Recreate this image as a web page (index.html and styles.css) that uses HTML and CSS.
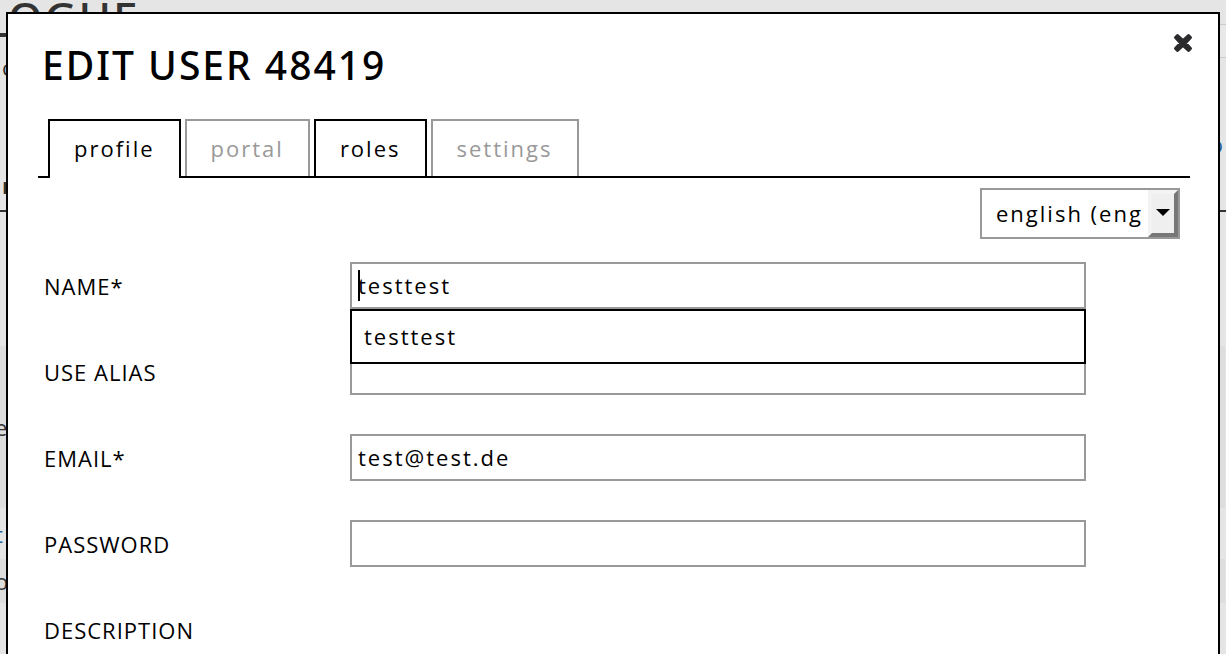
FILE: index.html
```html
<!DOCTYPE html>
<html lang="en">
<head>
<meta charset="utf-8">
<title>Edit user</title>
<link rel="stylesheet" href="styles.css">
</head>
<body>
<div class="page" aria-hidden="true">
  <header class="page-head">
    <div class="brand">
      <div class="brand-title">OGUE</div>
      <div class="crumb">c</div>
      <div class="crumb crumb-strong">r</div>
    </div>
    <div class="tools">
      <div class="tool-box"></div>
      <div class="tool-text">or</div>
    </div>
  </header>
  <div class="rows">
    <div class="row row-tall">e</div>
    <div class="row row-link">t</div>
    <div class="row row-shade">o</div>
  </div>
</div>

<main class="modal" role="dialog" aria-labelledby="modal-title">
  <div class="modal-head">
    <h1 class="modal-title" id="modal-title">EDIT USER 48419</h1>
    <button class="close" type="button" aria-label="Close">
      <svg viewBox="0 0 20 20" width="20" height="20"><path d="M4.500 2.500L10 7.500L15.500 2.500L17.500 4.500L12.500 10L17.500 15.500L15.500 17.500L10 12.500L4.500 17.500L2.500 15.500L7.500 10L2.500 4.500Z" fill="#2b2b2d" stroke="#2b2b2d" stroke-width="3" stroke-linejoin="round"/></svg>
    </button>
  </div>
  <nav class="tabs">
    <button class="tab tab-active" type="button">profile</button>
    <button class="tab tab-disabled" type="button" disabled>portal</button>
    <button class="tab" type="button">roles</button>
    <button class="tab tab-disabled" type="button" disabled>settings</button>
  </nav>
  <div class="language">
    <select class="language-select" aria-label="Language">
      <option>english (english)</option>
    </select>
    <span class="language-arrow"><svg viewBox="0 0 14 8" width="14" height="8"><path d="M0 0H14L7 7Z" fill="#000"/></svg></span>
  </div>
  <form class="form">
    <label class="label" for="name">NAME*</label>
    <div class="field field-focus">
      <input class="input" id="name" type="text" value="testtest" autocomplete="off">
      <ul class="suggest" role="listbox" aria-label="Suggestions">
        <li class="suggest-item" role="option">testtest</li>
      </ul>
    </div>
    <label class="label" for="alias">USE ALIAS</label>
    <div class="field"><input class="input" id="alias" type="text"></div>
    <label class="label" for="email">EMAIL*</label>
    <div class="field"><input class="input" id="email" type="email" value="test@test.de"></div>
    <label class="label" for="password">PASSWORD</label>
    <div class="field"><input class="input" id="password" type="password"></div>
    <label class="label" for="description">DESCRIPTION</label>
    <div class="field"><textarea class="input description" id="description"></textarea></div>
  </form>
</main>
</body>
</html>
```

FILE: styles.css
```css
* {
  box-sizing: border-box;
}

body {
  margin: 0;
  min-height: 100vh;
  overflow: hidden;
  background: #e5e5e5;
  color: #000;
  font: 22px/30px "Open Sans", "Noto Sans", sans-serif;
  letter-spacing: 2px;
}

button,
input,
textarea,
select {
  margin: 0;
  border-radius: 0;
  color: inherit;
  font: inherit;
  letter-spacing: inherit;
}

/* Page behind the dialog */
.page {
  color: #333;
}

.page-head {
  display: flex;
  height: 212px;
  border-bottom: 2px solid #333;
}

.brand {
  flex: 1;
}

.brand-title {
  height: 37px;
  padding-left: 8px;
  border-bottom: 4px solid #333;
  font-family: "Noto Sans", sans-serif;
  font-size: 44px;
  font-weight: 500;
  line-height: 34px;
}

.crumb {
  height: 60px;
  padding-left: 2px;
  line-height: 60px;
}

.crumb-strong {
  height: 112px;
  line-height: 176px;
  font-weight: 700;
}

.tools {
  flex: 1;
  padding-top: 24px;
  text-align: right;
}

.tool-box {
  height: 34px;
  border: solid #ccc;
  border-width: 1px 0;
  background: #e8e8e8;
}

.tool-text {
  padding-top: 71px;
  margin-right: -10px;
  color: #2b6297;
}

.rows {
  padding: 134px 1px 0 0;
}

.row {
  display: flex;
  align-items: center;
  height: 44px;
  margin-left: -5px;
}

.row-tall {
  height: 162px;
  background: #ddd;
}

.row-link {
  height: 51px;
  color: #2b6297;
}

.row-shade {
  background: #ddd;
}

/* Dialog */
.modal {
  position: absolute;
  top: 12px;
  right: 6px;
  left: 6px;
  min-height: 100vh;
  padding: 18px 28px 40px 30px;
  border: 2px solid #000;
  background: #fff;
}

.modal-head {
  display: flex;
  justify-content: space-between;
  align-items: flex-start;
  margin-right: -4px;
}

.modal-title {
  margin: 7px 0 0 4px;
  font-family: "Noto Sans", sans-serif;
  font-size: 39px;
  font-weight: 500;
  line-height: 52px;
}

.close {
  display: flex;
  padding: 1px;
  border: 0;
  background: none;
}

.tabs {
  display: flex;
  gap: 4px;
  margin-top: 28px;
  padding-left: 10px;
  border-bottom: 2px solid #000;
}

.tab {
  height: 57px;
  padding: 0 24px 2px;
  border: 2px solid #000;
  border-bottom: 0;
  background: #fff;
}

.tab-active {
  height: 59px;
  margin-bottom: -2px;
  padding-bottom: 4px;
}

.tab-disabled {
  border-color: #999;
  color: #999;
}

.language {
  display: grid;
  width: 200px;
  margin: 10px 10px 0 auto;
}

.language-select {
  grid-area: 1 / 1;
  width: 100%;
  height: 51px;
  padding: 0 34px 2px 14px;
  border: 2px solid #999;
  appearance: none;
  background: #fff;
}

.language-arrow {
  display: flex;
  grid-area: 1 / 1;
  align-items: center;
  justify-content: center;
  justify-self: end;
  width: 30px;
  height: 47px;
  margin: 2px;
  padding-bottom: 2px;
  border: 4px solid;
  border-color: #f3f3f3 #777 #777 #f3f3f3;
  background: #efefef;
  pointer-events: none;
}

.form {
  display: grid;
  grid-template-columns: 306px 1fr;
  row-gap: 39px;
  margin: 23px 104px 0 6px;
}

.label {
  line-height: 48px;
  letter-spacing: 1px;
}

.field {
  position: relative;
  height: 47px;
}

.field-focus::before {
  position: absolute;
  top: 8px;
  left: 8px;
  width: 2px;
  height: 31px;
  background: #000;
  content: "";
}

.input {
  display: block;
  width: 100%;
  height: 47px;
  padding: 0 6px 1px;
  border: 2px solid #999;
  background: #fff;
}

.description {
  height: 160px;
  margin-top: 70px;
}

.label {
  height: 47px;
}

.field-focus .input {
  background: transparent;
}

.suggest {
  position: absolute;
  z-index: 1;
  top: 100%;
  right: 0;
  left: 0;
  margin: 0;
  padding: 10px 12px 11px;
  border: 2px solid #000;
  background: #fff;
  list-style: none;
}
```
